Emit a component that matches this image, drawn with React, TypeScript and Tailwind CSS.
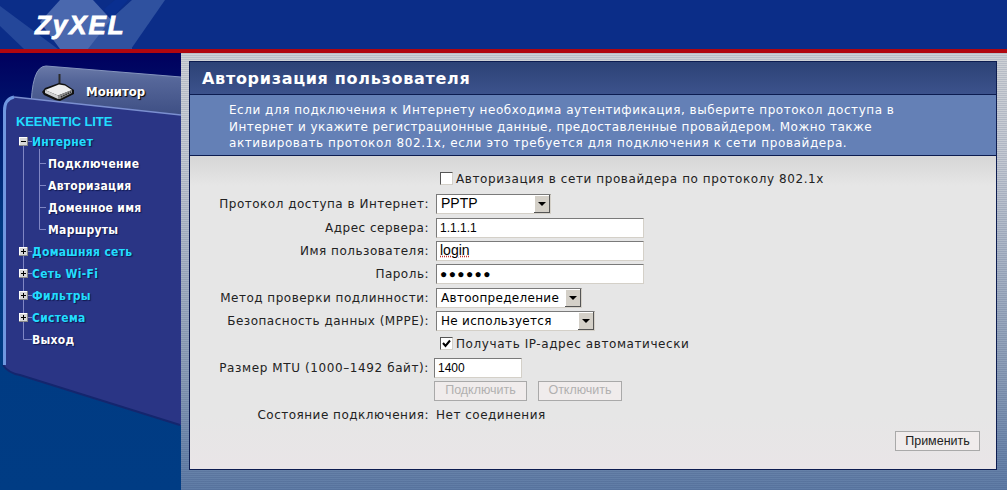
import type { ReactNode } from "react";

const SANS = "font-['DejaVu_Sans','Liberation_Sans',sans-serif]";
const NARROW = "font-['DejaVu_Sans_Condensed','DejaVu_Sans',sans-serif]";

// router icon next to the monitor tab
function RouterIcon() {
  return (
    <svg width="33" height="28" viewBox="0 0 33 28" className="shrink-0">
      <path d="M17.5 0 L17.5 14" stroke="#2a2a2a" strokeWidth="2" />
      <path d="M0 18 L3 14 L17 9 L23 10 L32 16 L32 20 L18 27 L13 26 L2 21 Z" fill="#111" />
      <path d="M3 16 L17 10.5 L23 11.5 L30 16 L16 21.5 Z" fill="#eeeeee" />
      <path d="M3 16 L16 21.5 L16 25 L3 19 Z" fill="#cfcfcf" />
      <path d="M16 21.5 L30 16 L30 19 L18 25 L16 25 Z" fill="#8f8f8f" />
      <path d="M19 23 L29 18" stroke="#333" strokeWidth="1.5" strokeDasharray="1.5 1" />
    </svg>
  );
}

// backdrop of the left column: tab + rounded menu panel
function SidebarShape() {
  return (
    <svg width="181" height="437" viewBox="0 0 181 437" className="absolute left-0 top-0">
      <defs>
        <linearGradient id="side" x1="0" y1="0" x2="0" y2="1">
          <stop offset="0" stopColor="#00005e" />
          <stop offset="0.13" stopColor="#00146c" />
          <stop offset="0.4" stopColor="#003a82" />
          <stop offset="1" stopColor="#003c84" />
        </linearGradient>
        <linearGradient id="tab" x1="0" y1="0" x2="0" y2="1">
          <stop offset="0" stopColor="#6a7aa8" />
          <stop offset="0.2" stopColor="#56679a" />
          <stop offset="1" stopColor="#324379" />
        </linearGradient>
      </defs>
      <rect width="181" height="437" fill="url(#side)" />
      <path d="M31 60 Q31 13 46 13 L181 24 L181 80 L31 80 Z" fill="url(#tab)" />
      <path d="M31 60 Q31 13 46 13 L181 24" fill="none" stroke="#8494bd" strokeWidth="1" />
      <path d="M3 312 L3 58 Q3 44 14 44 L181 62 L181 372 L180 372 L20 322 Q8 320 3 312 Z" fill="#2a3585" />
      <path d="M3 312 Q8 320 20 322 L180 372" fill="none" stroke="#14266e" strokeWidth="2" />
      <path d="M14 44 L181 62" fill="none" stroke="#7b8fd0" strokeWidth="1.5" />
      <path d="M4.5 312 L4.5 58 Q4.5 46 14 44" fill="none" stroke="#6f97e0" strokeWidth="3" />
      {/* tree lines */}
      <g stroke="#7f86c4" strokeWidth="1" fill="none">
        <path d="M23.5 92 L23.5 286.5 L32 286.5" />
        <path d="M39.5 96 L39.5 176.5 L46 176.5" />
        <path d="M39.5 110.5 L46 110.5 M39.5 132.5 L46 132.5 M39.5 154.5 L46 154.5" />
        <path d="M28 88.5 L32 88.5 M28 198.5 L32 198.5 M28 220.5 L32 220.5 M28 242.5 L32 242.5 M28 264.5 L32 264.5" />
      </g>
    </svg>
  );
}

function Toggle({ open }: { open?: boolean }) {
  return (
    <span className="absolute left-[19px] top-[6px] flex h-[9px] w-[9px] items-center justify-center bg-[#d8d8d8] shadow-[inset_-1px_-1px_0_#888,inset_1px_1px_0_#fff]">
      <span className="relative h-px w-[5px] bg-black">
        {!open && <span className="absolute left-[2px] top-[-2px] h-[5px] w-px bg-black" />}
      </span>
    </span>
  );
}

function MenuRow({ label, kind, toggle }: { label: string; kind: "top" | "sub" | "exit"; toggle?: "open" | "closed" }) {
  return (
    <div
      className={`relative flex h-[22px] items-center ${NARROW} font-bold text-[12px] tracking-[0.3px] [text-shadow:1px_1px_1px_#10184f] ${
        kind === "top" ? "pl-[32px] text-[#22ddff]" : kind === "sub" ? "pl-[48px] text-white" : "pl-[32px] text-white"
      }`}
    >
      {toggle && <Toggle open={toggle === "open"} />}
      {label}
    </div>
  );
}

function Row({ label, children, className = "" }: { label?: string; children: ReactNode; className?: string }) {
  return (
    <div className={`flex h-[23px] items-center ${className}`}>
      <div className="w-[241px] shrink-0 whitespace-nowrap pr-[2px] text-right">{label}</div>
      {children}
    </div>
  );
}

function Field({ width, children }: { width: string; children: ReactNode }) {
  return (
    <div
      className={`flex h-[20px] items-center border border-t-[#7a7a7a] border-l-[#7a7a7a] border-r-[#d4d0c8] border-b-[#d4d0c8] bg-white pl-[3px] font-['Liberation_Sans',sans-serif] text-[12px] tracking-normal text-black ${width}`}
    >
      {children}
    </div>
  );
}

function Select({ width, value, arial }: { width: string; value: string; arial?: boolean }) {
  return (
    <div
      className={`ml-[5px] flex h-[20px] items-center justify-between border border-t-[#7a7a7a] border-l-[#7a7a7a] border-r-[#d4d0c8] border-b-[#d4d0c8] bg-white pl-[4px] text-black ${width} ${
        arial ? "font-['Liberation_Sans',sans-serif] text-[14px] tracking-normal" : "font-['DejaVu_Sans',sans-serif] text-[12px] tracking-[0.3px]"
      }`}
    >
      <span className="whitespace-nowrap">{value}</span>
      <span className="flex h-[18px] w-[16px] items-center justify-center bg-[#d4d0c8] shadow-[inset_-1px_-1px_0_#555,inset_1px_1px_0_#fff]">
        <span className="h-0 w-0 border-x-[4px] border-t-[4px] border-x-transparent border-t-black" />
      </span>
    </div>
  );
}

function Check({ checked, label }: { checked?: boolean; label: string }) {
  return (
    <div className="ml-[9px] flex items-center gap-[3px] whitespace-nowrap tracking-[0.58px]">
      <span className="flex h-[13px] w-[13px] items-center justify-center border border-t-[#555] border-l-[#555] border-r-[#d4d0c8] border-b-[#d4d0c8] bg-white">
        {checked && (
          <svg width="9" height="9" viewBox="0 0 9 9">
            <path d="M1 4 L3.5 7 L8 1.5" fill="none" stroke="#000" strokeWidth="2" />
          </svg>
        )}
      </span>
      {label}
    </div>
  );
}

function Btn({ label, width, disabled }: { label: string; width: string; disabled?: boolean }) {
  return (
    <div
      className={`flex h-[20px] items-center justify-center border border-[#a9a9a9] bg-[#f0ecec] font-['Liberation_Sans',sans-serif] text-[12.5px] tracking-normal ${width} ${
        disabled ? "text-[#b0b0b0]" : "text-[#222]"
      }`}
    >
      {label}
    </div>
  );
}

export default function App() {
  return (
    <div className={`flex h-[490px] w-full flex-col overflow-hidden ${SANS}`}>
      {/* шапка */}
      <header className="relative h-[49px] shrink-0 overflow-hidden bg-[#0b2d88]">
        <svg width="200" height="49" viewBox="0 0 200 49" className="absolute left-0 top-0">
          <path d="M0 0 L60 0 L60 6 L0 6 Z" fill="#0b2d88" />
          <path d="M0 6 L0 26 L24 49 L58 49 Z" fill="#24479a" />
          <path d="M60 0 L93 0 L117 26 L132 49 L60 49 L40 22 Z" fill="#4a68ae" />
          <path d="M132 0 L165 0 L131 49 L88 49 L112 18 Z" fill="#2f519f" />
          <path d="M112 18 L128 0 L115 0 L104 9 Z" fill="#0a2f90" />
        </svg>
        <div className="relative ml-[35px] mt-[9px] font-['Liberation_Sans',sans-serif] text-[26px] font-bold italic leading-[32px] tracking-[1.9px] text-white [-webkit-text-stroke:0.8px_white]">
          ZyXEL
        </div>
      </header>
      <div className="h-[4px] shrink-0 bg-[#b0060f]" />

      <div className="flex min-h-0 flex-1">
        {/* левое меню */}
        <aside className="relative w-[181px] shrink-0">
          <SidebarShape />
          <div className={`relative flex h-[44px] items-center gap-[11px] pl-[42px] pt-[32px] ${NARROW} font-bold text-[13px] text-white [text-shadow:1px_1px_1px_#000]`}>
            <div className="mt-[-6px]">
              <RouterIcon />
            </div>
            <span className="mt-[1px]">Монитор</span>
          </div>
          <div className="relative pt-[16px]">
            <div className="flex h-[18px] items-center pl-[16px] font-['Liberation_Sans',sans-serif] text-[13px] font-bold tracking-[-0.1px] text-[#22ddff]">
              KEENETIC LITE
            </div>
            <MenuRow label="Интернет" kind="top" toggle="open" />
            <MenuRow label="Подключение" kind="sub" />
            <MenuRow label="Авторизация" kind="sub" />
            <MenuRow label="Доменное имя" kind="sub" />
            <MenuRow label="Маршруты" kind="sub" />
            <MenuRow label="Домашняя сеть" kind="top" toggle="closed" />
            <MenuRow label="Сеть Wi-Fi" kind="top" toggle="closed" />
            <MenuRow label="Фильтры" kind="top" toggle="closed" />
            <MenuRow label="Система" kind="top" toggle="closed" />
            <MenuRow label="Выход" kind="exit" />
          </div>
        </aside>

        {/* основная часть */}
        <main className="flex-1 bg-[repeating-linear-gradient(180deg,rgba(20,40,90,0.12)_0_1px,transparent_1px_2px),linear-gradient(180deg,#cfd2d6_0%,#c4c9d2_25%,#8a9cb6_75%,#5f7ca6_100%)] pb-[20px] pl-[8px] pr-[10px] pt-[8px]">
          <div className="flex h-[409px] flex-col border border-[#0c1c50] bg-[#e6e6e6] text-[12px] tracking-[0.5px] text-[#222]">
            <div className="flex h-[33px] shrink-0 items-center border-b border-[#0c1c50] bg-[linear-gradient(180deg,#2c4276,#3c528c)] pl-[12px] pt-[2px] text-[16px] font-bold tracking-[0.7px] text-white">
              Авторизация пользователя
            </div>
            <div className="h-[61px] shrink-0 whitespace-nowrap border-b border-[#0c1c50] bg-[#6480b6] pl-[39px] pt-[7px] text-[12px] leading-[16.5px] text-white">
              <div className="tracking-[0.53px]">Если для подключения к Интернету необходима аутентификация, выберите протокол доступа в</div>
              <div className="tracking-[0.45px]">Интернет и укажите регистрационные данные, предоставленные провайдером. Можно также</div>
              <div className="tracking-[0.58px]">активировать протокол 802.1x, если это требуется для подключения к сети провайдера.</div>
            </div>
            <div className="flex-1 bg-[linear-gradient(180deg,#d6d6d6_0px,#e6e6e6_30px,#e6e6e6_260px,#e9e5e7_100%)] pt-[11px]">
              <Row>
                <Check label="Авторизация в сети провайдера по протоколу 802.1x" />
              </Row>
              <Row label="Протокол доступа в Интернет:" className="mt-[2px]">
                <Select width="w-[115px]" value="PPTP" arial />
              </Row>
              <Row label="Адрес сервера:" className="mt-px">
                <div className="ml-[5px]">
                  <Field width="w-[208px]">1.1.1.1</Field>
                </div>
              </Row>
              <Row label="Имя пользователя:">
                <div className="ml-[5px]">
                  <Field width="w-[208px]">
                    <span className="text-[14px] underline decoration-[#c03030] decoration-dotted">login</span>
                  </Field>
                </div>
              </Row>
              <Row label="Пароль:">
                <div className="ml-[5px]">
                  <Field width="w-[208px]">
                    <span className="text-[12px] tracking-[1.4px]">●●●●●●</span>
                  </Field>
                </div>
              </Row>
              <Row label="Метод проверки подлинности:" className="mt-px">
                <Select width="w-[146px]" value="Автоопределение" />
              </Row>
              <Row label="Безопасность данных (MPPE):">
                <Select width="w-[159px]" value="Не используется" />
              </Row>
              <Row>
                <Check checked label="Получать IP-адрес автоматически" />
              </Row>
              <Row label="Размер MTU (1000–1492 байт):" className="mt-px tracking-[0.6px]">
                <div className="ml-[3px]">
                  <Field width="w-[88px]">1400</Field>
                </div>
              </Row>
              <Row>
                <div className="ml-[3px] flex gap-[11px]">
                  <Btn label="Подключить" width="w-[93px]" disabled />
                  <Btn label="Отключить" width="w-[84px]" disabled />
                </div>
              </Row>
              <Row label="Состояние подключения:" className="mt-px">
                <span className="ml-[5px] whitespace-nowrap">Нет соединения</span>
              </Row>
              <div className="mt-[5px] flex justify-end pr-[16px]">
                <Btn label="Применить" width="w-[85px]" />
              </div>
            </div>
          </div>
        </main>
      </div>
    </div>
  );
}
